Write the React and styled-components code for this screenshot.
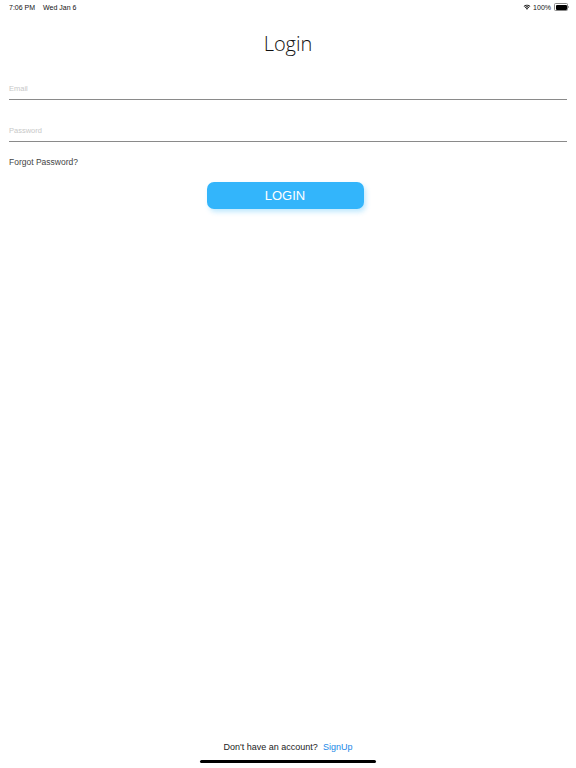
import React from "react";
import styled, { createGlobalStyle } from "styled-components";

const Global = createGlobalStyle`
  html, body { margin: 0; padding: 0; background: #fff; }
  body { font-family: "Liberation Sans", Arial, sans-serif; }
  #root { height: 768px; }
`;

const Page = styled.div`
  width: 576px;
  height: 768px;
  display: flex;
  flex-direction: column;
  background: #fff;
  overflow: hidden;
`;

const StatusBar = styled.div`
  height: 14px;
  padding: 0 8px 0 9px;
  display: flex;
  align-items: center;
  justify-content: space-between;
  font-family: "Liberation Sans", Arial, sans-serif;
  font-size: 7px;
  color: #111;
`;

const StatusLeft = styled.div`
  display: flex;
  gap: 8px;
`;

const StatusRight = styled.div`
  display: flex;
  align-items: center;
  gap: 2px;
`;

const Battery = styled.div`
  width: 11px;
  height: 5px;
  border: 0.5px solid #888;
  border-radius: 1.5px;
  padding: 0.5px;
  position: relative;
  margin-left: 1px;
  &::before {
    content: "";
    display: block;
    width: 100%;
    height: 100%;
    background: #000;
    border-radius: 1px;
  }
  &::after {
    content: "";
    position: absolute;
    right: -2px;
    top: 1.5px;
    width: 1px;
    height: 2.5px;
    background: #888;
    border-radius: 0 1px 1px 0;
  }
`;

const Title = styled.h1`
  margin: 18px 0 0;
  text-align: center;
  font-family: "Open Sans", sans-serif;
  font-weight: 300;
  font-size: 20px;
  line-height: 24px;
  color: #111;
`;

const Form = styled.div`
  padding: 0 9px;
  display: flex;
  flex-direction: column;
`;

const Field = styled.div`
  margin-top: ${(p) => p.$top}px;
  display: flex;
  flex-direction: column;
  border-bottom: 1px solid #8a8a8a;
  padding-bottom: 5px;
`;

const Placeholder = styled.span`
  font-size: 7.5px;
  line-height: 10px;
  color: #c8c8c8;
`;

const Forgot = styled.span`
  margin-top: 15px;
  font-size: 8.5px;
  line-height: 10px;
  color: #444;
`;

const ButtonRow = styled.div`
  display: flex;
  justify-content: center;
  padding-right: 6px;
  margin-top: 15px;
`;

const LoginButton = styled.button`
  width: 157px;
  height: 27px;
  border: none;
  border-radius: 7px;
  background: #33b5fb;
  color: #fff;
  font-family: "Liberation Sans", Arial, sans-serif;
  font-size: 13px;
  box-shadow: 2px 3px 5px rgba(51, 181, 251, 0.3);
  cursor: pointer;
`;

const Spacer = styled.div`
  flex: 1;
`;

const Footer = styled.div`
  display: flex;
  justify-content: center;
  gap: 5px;
  font-size: 9px;
  line-height: 10px;
  color: #222;
  margin-bottom: 8px;
`;

const Link = styled.span`
  color: #1a87e6;
`;

const HomeIndicator = styled.div`
  width: 176px;
  height: 3px;
  border-radius: 2px;
  background: #000;
  margin: 0 auto 5px;
`;

const Wifi = () => (
  <svg width="8" height="6" viewBox="0 0 16 12">
    <path d="M8 11.5 L10.2 9 A3.2 3.2 0 0 0 5.8 9 Z" fill="#000" />
    <path d="M3.6 6.8 A6.3 6.3 0 0 1 12.4 6.8 L11.1 8.2 A4.5 4.5 0 0 0 4.9 8.2 Z" fill="#000" />
    <path d="M1.2 4.3 A9.8 9.8 0 0 1 14.8 4.3 L13.5 5.7 A8 8 0 0 0 2.5 5.7 Z" fill="#000" />
  </svg>
);

export default function App() {
  return (
    <Page>
      <Global />
      <StatusBar>
        <StatusLeft>
          <span>7:06 PM</span>
          <span>Wed Jan 6</span>
        </StatusLeft>
        <StatusRight>
          <Wifi />
          <span>100%</span>
          <Battery />
        </StatusRight>
      </StatusBar>
      <Title>Login</Title>
      <Form>
        <Field $top={28}>
          <Placeholder>Email</Placeholder>
        </Field>
        <Field $top={26}>
          <Placeholder>Password</Placeholder>
        </Field>
        <Forgot>Forgot Password?</Forgot>
      </Form>
      <ButtonRow>
        <LoginButton>LOGIN</LoginButton>
      </ButtonRow>
      <Spacer />
      <Footer>
        <span>Don't have an account?</span>
        <Link>SignUp</Link>
      </Footer>
      <HomeIndicator />
    </Page>
  );
}
